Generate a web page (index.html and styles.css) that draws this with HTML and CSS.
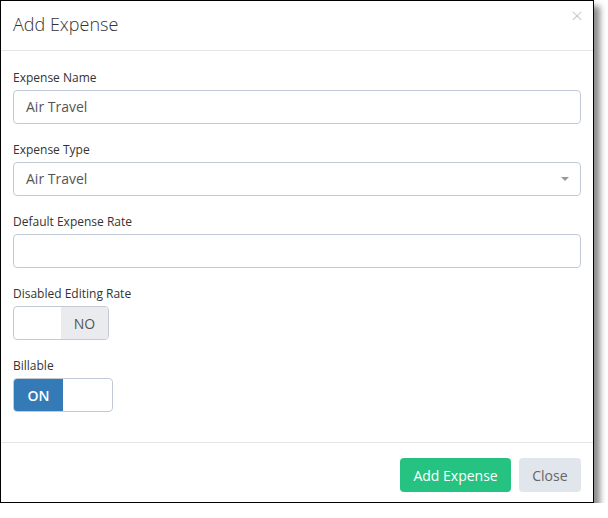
FILE: index.html
```html
<!DOCTYPE html>
<html>
<head>
<meta charset="utf-8">
<link rel="stylesheet" href="styles.css">
</head>
<body>
<div class="modal">
  <div class="modal-header">
    <h4 class="modal-title">Add Expense</h4>
    <span class="close">&times;</span>
  </div>
  <div class="modal-body">
    <div class="group">
      <label class="label">Expense Name</label>
      <div class="input">Air Travel</div>
    </div>
    <div class="group">
      <label class="label">Expense Type</label>
      <div class="input select">Air Travel<span class="caret"></span></div>
    </div>
    <div class="group">
      <label class="label">Default Expense Rate</label>
      <div class="input"></div>
    </div>
    <div class="group">
      <label class="label">Disabled Editing Rate</label>
      <div class="toggle toggle-off">
        <span class="half blank"></span>
        <span class="half off">NO</span>
      </div>
    </div>
    <div class="group">
      <label class="label">Billable</label>
      <div class="toggle toggle-on">
        <span class="half on">ON</span>
        <span class="half blank"></span>
      </div>
    </div>
  </div>
  <div class="modal-footer">
    <button class="btn btn-green">Add Expense</button>
    <button class="btn btn-default">Close</button>
  </div>
</div>
</body>
</html>
```
FILE: styles.css
```css
html, body {
  margin: 0;
  padding: 0;
  background: #fff;
}
body {
  font-family: "Open Sans", "Noto Sans", sans-serif;
  color: #333;
}
.modal {
  width: 592px;
  border: 1px solid #000;
  background: #fff;
  box-shadow: 6px 6px 6px rgba(0, 0, 0, 0.45);
}
.modal-header {
  position: relative;
  height: 49px;
  border-bottom: 1px solid #e5e5e5;
  padding: 0 12px;
  display: flex;
  align-items: center;
}
.modal-title {
  margin: 0;
  font-size: 18px;
  font-weight: 300;
  color: #333;
  line-height: 24px;
  margin-top: -4px;
}
.close {
  position: absolute;
  right: 10px;
  top: 3px;
  font-size: 21px;
  line-height: 22px;
  color: #c4c4c4;
  font-weight: 300;
}
.modal-body {
  padding: 18px 12px 13px;
}
.group {
  margin-bottom: 17px;
}
.label {
  display: block;
  font-size: 12px;
  line-height: 17px;
  margin-bottom: 4px;
  color: #333;
}
.input {
  position: relative;
  box-sizing: border-box;
  height: 34px;
  border: 1px solid #c2cad8;
  border-radius: 4px;
  padding: 0 12px;
  font-size: 14px;
  line-height: 32px;
  color: #555;
}
.caret {
  position: absolute;
  right: 11px;
  top: 14px;
  width: 0;
  height: 0;
  border-left: 4px solid transparent;
  border-right: 4px solid transparent;
  border-top: 4px solid #999;
}
.toggle {
  display: flex;
  box-sizing: border-box;
  height: 34px;
  border: 1px solid #c2cad8;
  border-radius: 4px;
  overflow: hidden;
}
.toggle-off {
  width: 96px;
}
.toggle-on {
  width: 100px;
}
.half {
  flex: 1;
  display: flex;
  align-items: center;
  justify-content: center;
  font-size: 14px;
}
.off {
  background: #e9ebef;
  color: #555;
}
.on {
  background: #337ab7;
  color: #fff;
  font-weight: 600;
}
.toggle-on .half.on {
  flex: 0 0 49px;
}
.modal-footer {
  border-top: 1px solid #e5e5e5;
  padding: 15px 12px 10px;
  display: flex;
  justify-content: flex-end;
  gap: 8px;
}
.btn {
  height: 34px;
  border: none;
  border-radius: 4px;
  font-family: "Open Sans", "Noto Sans", sans-serif;
  font-size: 14px;
  cursor: pointer;
}
.btn-green {
  background: #26c281;
  color: #fff;
  padding: 0 13px;
}
.btn-default {
  background: #e1e5ec;
  color: #666;
  padding: 0 13.5px;
}
```
